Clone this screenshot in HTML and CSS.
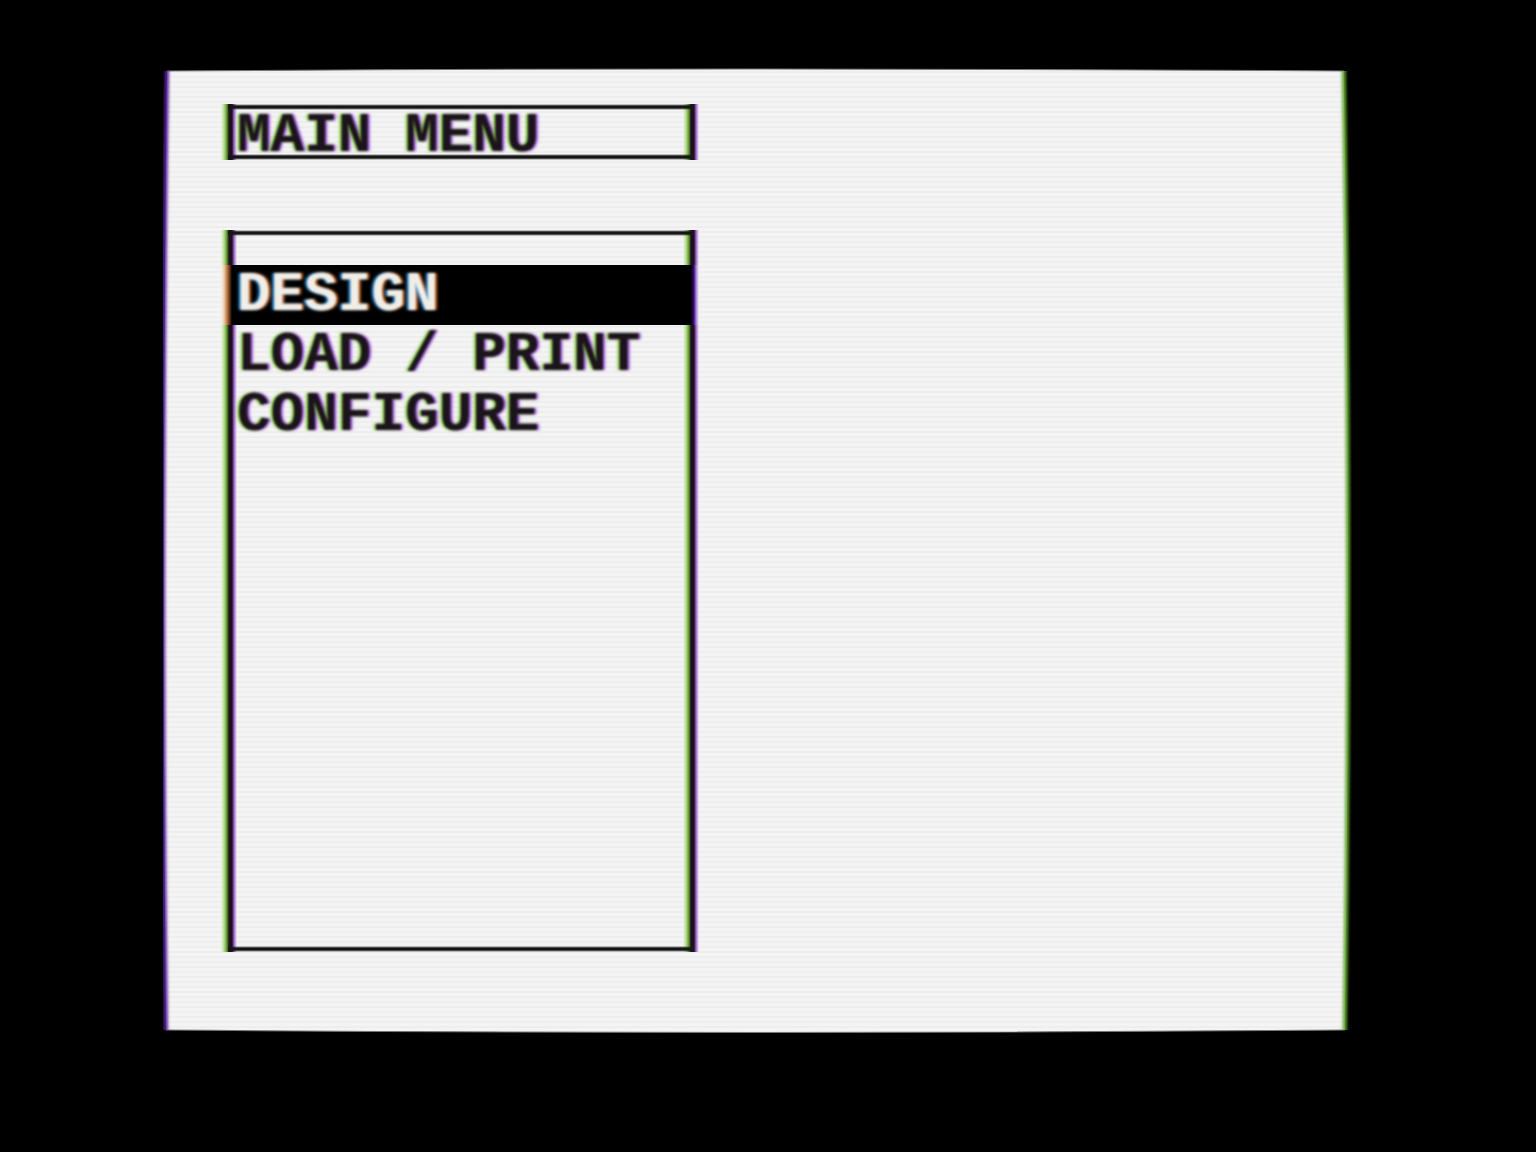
FILE: index.html
```html
<!DOCTYPE html>
<html lang="en">
<head>
    <meta charset="UTF-8">
    <meta name="viewport" content="width=device-width, initial-scale=1.0">
    <title>Main Menu</title>
    <link rel="stylesheet" href="styles.css">
</head>
<body>
    <main class="screen">
        <!-- Curved tube face -->
        <svg class="tube" viewBox="0 0 1188 966" preserveAspectRatio="none" aria-hidden="true">
            <defs>
                <pattern id="scanlines" width="8" height="5" patternUnits="userSpaceOnUse">
                    <rect width="8" height="5" fill="#f4f4f4"/>
                    <rect y="3" width="8" height="2" fill="#eeeeee"/>
                </pattern>
                <filter id="soft" x="-2%" y="-2%" width="104%" height="104%">
                    <feGaussianBlur stdDeviation="1.5 0.5"/>
                </filter>
            </defs>
            <path d="M4 3 Q594 -1 1180 3 Q1188 483 1181 962 Q594 967 3 962 Q-2 483 4 3Z" fill="url(#scanlines)"/>
            <path d="M4 3 Q594 -1 1180 3 M1181 962 Q594 967 3 962" fill="none" stroke="#777" stroke-width="1"/>
            <g fill="none" filter="url(#soft)">
                <path d="M4 3 Q-3 483 3 962" stroke="#5a20a0" stroke-width="4"/>
                <path d="M1180 3 Q1188 483 1181 962" stroke="#65a832" stroke-width="4"/>
            </g>
        </svg>

        <header class="title-box">
            <h1>MAIN MENU</h1>
        </header>

        <nav class="menu">
            <button class="item selected" type="button"><span>DESIGN</span></button>
            <button class="item" type="button"><span>LOAD / PRINT</span></button>
            <button class="item" type="button"><span>CONFIGURE</span></button>
        </nav>
    </main>
</body>
</html>
```
FILE: styles.css
```css
* {
    margin: 0;
    padding: 0;
    box-sizing: border-box;
}

body {
    background-color: #000;
    min-height: 100vh;
    display: flex;
    padding: 68px 12% 118px 163px;
    font-family: "Liberation Mono", monospace;
}

.screen {
    position: relative;
    flex: 1;
    display: flex;
    flex-direction: column;
    gap: 70px;
    padding: 36px 5% 82px 58px;
}

.tube {
    position: absolute;
    inset: 0;
    width: 100%;
    height: 100%;
}

/* Box frames: dark lines with colour fringes on the upright sides */
.title-box,
.menu {
    --side: linear-gradient(to right, transparent, #b5e08a 3px, #5b9430 6px, #20101c 8px, #20101c 11px, #9a62d0 13px, transparent 16px);
    --line: linear-gradient(transparent, #151515 2px, #151515 4px, transparent 6px);
    position: relative;
    width: 44%;
    min-width: 478px;
    background-image: var(--line), var(--line), var(--side), var(--side);
    background-position: top, bottom, left, right;
    background-size: calc(100% - 14px) 6px, calc(100% - 14px) 6px, 16px 100%, 16px 100%;
    background-repeat: no-repeat;
}

h1,
.item {
    padding-left: 16px;
    font-size: 56px;
    font-weight: bold;
    line-height: 60px;
    color: #1c141c;
    white-space: pre;
    text-shadow: -2px 0 2px #86d03c, 2px 0 2px #9a4ce0;
}

.title-box {
    padding-top: 8px;
}

h1 {
    line-height: 48px;
    filter: blur(1px);
}

.menu {
    flex: 1;
    padding-top: 35px;
}

.item {
    display: block;
    width: 100%;
    height: 60px;
    border: none;
    background: none;
    font-family: inherit;
    text-align: left;
    cursor: pointer;
}

.item span {
    display: block;
    filter: blur(1px);
}

/* The highlight bar runs over both side lines */
.item.selected {
    background: linear-gradient(to right, #f3f3f3, #f0cfa8 3px, #a85f30 7px, #000 11px, #000 calc(100% - 8px), #3c1080 calc(100% - 5px), #a878d8 calc(100% - 3px), #f3f3f3);
    color: #f0eee6;
    text-shadow: -2px 0 2px #2a8fe0, 2px 0 2px #d8702c;
}
```
